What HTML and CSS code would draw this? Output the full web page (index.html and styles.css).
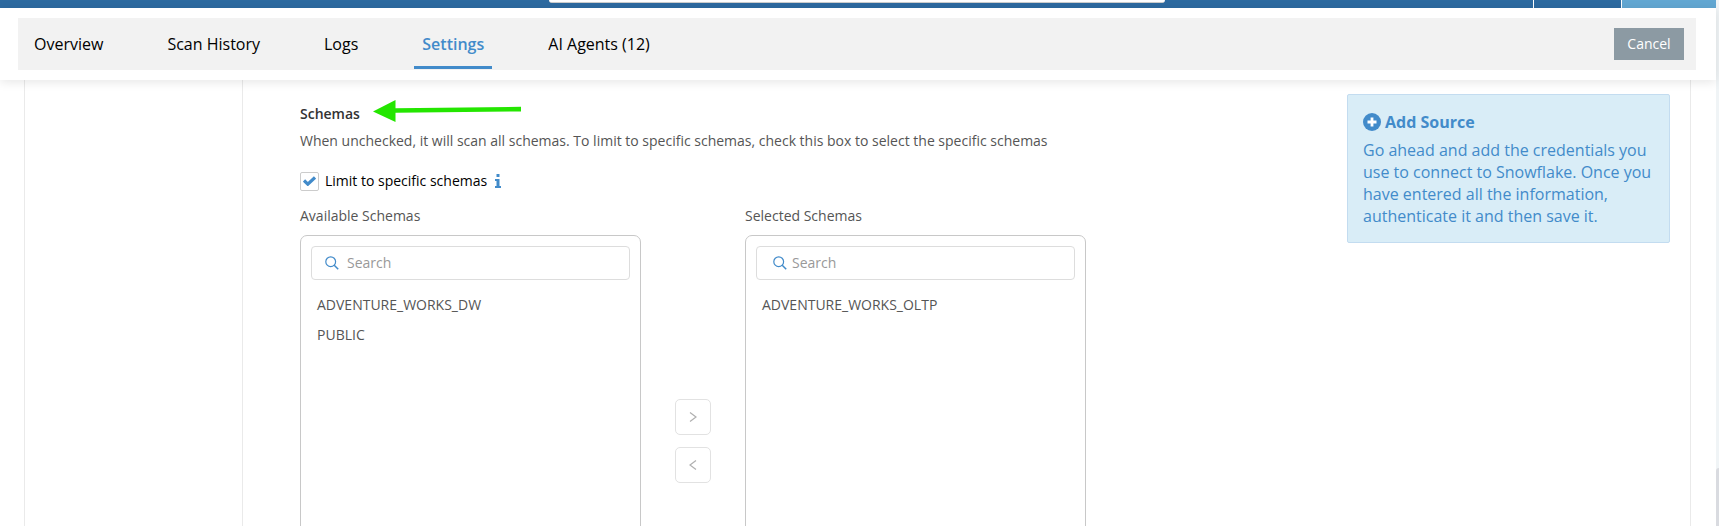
FILE: index.html
```html
<!DOCTYPE html>
<html lang="en">
<head>
<meta charset="utf-8">
<title>Source Settings</title>
<link rel="stylesheet" href="styles.css">
</head>
<body>
<div class="app">
  <div class="page">
    <div class="topbar">
      <div class="topbar-search"></div>
      <div class="topbar-cell"></div>
      <div class="topbar-cell topbar-user"></div>
    </div>
    <header class="header">
      <nav class="tabs">
        <a class="tab" href="#">Overview</a>
        <a class="tab" href="#">Scan History</a>
        <a class="tab" href="#">Logs</a>
        <a class="tab tab-active" href="#">Settings</a>
        <a class="tab" href="#">AI Agents (12)</a>
        <button class="cancel" type="button">Cancel</button>
      </nav>
    </header>
    <main class="panel">
      <div class="steps"></div>
      <section class="content">
        <div class="title-row">
          <h2 class="title">Schemas</h2>
          <svg class="arrow" width="150" height="24" viewBox="0 0 150 24" aria-hidden="true"><path d="M0 11.600 22.500 0v8.200L148 6.800v4.600L22.500 12.800V22z" fill="#24e600"/></svg>
        </div>
        <p class="hint">When unchecked, it will scan all schemas. To limit to specific schemas, check this box to select the specific schemas</p>
        <div class="limit">
          <input class="check" type="checkbox" id="limit" checked>
          <label for="limit">Limit to specific schemas</label>
          <svg class="info" width="6" height="14" viewBox="0 0 6 14" aria-hidden="true"><path d="M1.500 0h3v3h-3zM0 5h4.500v7H6v2H0v-2h1.500V7H0z" fill="#428bca"/></svg>
        </div>
        <div class="transfer">
          <div class="column">
            <label class="column-label" for="search-available">Available Schemas</label>
            <div class="list-box">
              <div class="search">
                <svg width="14" height="14" viewBox="0 0 14 14" aria-hidden="true"><circle cx="5.700" cy="5.700" r="4.900" fill="none" stroke="#428bca" stroke-width="1.200"/><path d="M9.200 9.200l4 4" stroke="#428bca" stroke-width="1.500"/></svg>
                <input id="search-available" type="text" placeholder="Search">
              </div>
              <ul class="items"><li>ADVENTURE_WORKS_DW</li><li>PUBLIC</li></ul>
            </div>
          </div>
          <div class="moves">
            <button class="move" type="button" aria-label="Add to selected"><svg width="8" height="12" viewBox="0 0 8 12"><path d="M1 1.500 7 6 1 10.500" fill="none" stroke="#b0b0b0" stroke-width="1.200"/></svg></button>
            <button class="move" type="button" aria-label="Remove from selected"><svg width="8" height="12" viewBox="0 0 8 12"><path d="M7 1.500 1 6l6 4.500" fill="none" stroke="#b0b0b0" stroke-width="1.200"/></svg></button>
          </div>
          <div class="column">
            <label class="column-label" for="search-selected">Selected Schemas</label>
            <div class="list-box">
              <div class="search search-selected">
                <svg width="14" height="14" viewBox="0 0 14 14" aria-hidden="true"><circle cx="5.700" cy="5.700" r="4.900" fill="none" stroke="#428bca" stroke-width="1.200"/><path d="M9.200 9.200l4 4" stroke="#428bca" stroke-width="1.500"/></svg>
                <input id="search-selected" type="text" placeholder="Search">
              </div>
              <ul class="items"><li>ADVENTURE_WORKS_OLTP</li></ul>
            </div>
          </div>
        </div>
      </section>
      <aside class="callout">
        <h3 class="callout-title"><svg width="18" height="18" viewBox="0 0 18 18" aria-hidden="true"><circle cx="9" cy="9" r="9" fill="#428bca"/><path d="M9 4.500v9M4.500 9h9" stroke="#fff" stroke-width="2.800"/></svg>Add Source</h3>
        <p>Go ahead and add the credentials you use to connect to Snowflake. Once you have entered all the information, authenticate it and then save it.</p>
      </aside>
    </main>
  </div>
  <div class="track"><div class="thumb"></div></div>
</div>
</body>
</html>
```

FILE: styles.css
```css
* { box-sizing: border-box; }
body, h2, h3, p, ul { margin: 0; padding: 0; }
body, input, button {
  font-family: "Open Sans", "Noto Sans", sans-serif;
  font-size: 14px;
  line-height: 20px;
}
body { background: #fff; color: #555; }
.app { display: flex; height: 100vh; overflow: hidden; }
.page { flex: 1; min-width: 0; }

.topbar {
  display: flex;
  justify-content: flex-end;
  height: 8px;
  background: #2d6aa0;
}
.topbar-search {
  width: 616px;
  height: 3px;
  margin-right: auto;
  margin-left: 32%;
  border-bottom: 1px solid #ccc;
  border-radius: 0 0 4px 4px;
  background: #fff;
}
.topbar-cell { width: 88px; border-left: 1px solid #fff; }
.topbar-user { width: 95px; background: #62a7d2; }

.header {
  position: relative;
  z-index: 1;
  padding: 10px 20px 10px 18px;
  background: #fff;
  box-shadow: 0 2px 10px rgba(0, 0, 0, 0.1);
}
.tabs {
  display: flex;
  align-items: center;
  gap: 48px;
  height: 52px;
  padding: 0 12px 0 8px;
  background: #f2f2f2;
}
.tab {
  height: 50px;
  padding: 0 8px;
  border-bottom: 3px solid transparent;
  color: #000;
  font-size: 16px;
  line-height: 50px;
  text-decoration: none;
}
.tab-active { border-color: #428bca; color: #428bca; font-weight: 600; }
.cancel {
  width: 70px;
  height: 32px;
  margin-left: auto;
  padding: 0;
  border: 0;
  background: #8c9aa3;
  color: #fff;
}

.panel {
  display: flex;
  align-items: flex-start;
  margin: 0 25px 0 24px;
  border: solid #eaeaea;
  border-width: 0 1px;
}
.steps { width: 217px; }
.content {
  flex: 1;
  padding: 20px 0 24px 57px;
  border-left: 1px solid #eaeaea;
}
.title-row { display: flex; gap: 13px; height: 24px; }
.title { color: #333; font-size: 14px; font-weight: 600; line-height: 28px; }
.hint { margin-top: 7px; }
.limit {
  display: flex;
  align-items: center;
  height: 20px;
  margin-top: 20px;
  color: #000;
}
.check {
  appearance: none;
  width: 19px;
  height: 19px;
  margin: 0 6px 0 0;
  border: 1px solid #ccc;
  border-radius: 2px;
}
.check:checked {
  background: url("data:image/svg+xml,%3Csvg xmlns='http://www.w3.org/2000/svg' width='13' height='10' viewBox='0 0 13 10'%3E%3Cpath d='M1 4.500l3.800 3.700L12 1.500' fill='none' stroke='%23428bca' stroke-width='3.200'/%3E%3C/svg%3E") center no-repeat;
}
.info { margin-left: 8px; }
.transfer { display: flex; margin-top: 15px; }
.column { width: 341px; }
.column-label { display: block; }
.list-box {
  height: 412px;
  margin-top: 9px;
  padding: 10px;
  border: 1px solid #c8c8c8;
  border-radius: 7px;
}
.search {
  display: flex;
  align-items: center;
  gap: 8px;
  height: 34px;
  padding: 0 13px;
  border: 1px solid #ddd;
  border-radius: 4px;
}
.search-selected { gap: 5px; padding-left: 16px; }
.search input {
  flex: 1;
  min-width: 0;
  padding: 0;
  border: 0;
  outline: 0;
  background: none;
  color: #555;
}
.search input::placeholder { color: #999; }
.items { padding: 10px 6px; list-style: none; line-height: 30px; }
.moves {
  display: flex;
  flex-direction: column;
  justify-content: center;
  gap: 12px;
  width: 104px;
  padding: 29px 0 0 34px;
}
.move {
  display: flex;
  align-items: center;
  justify-content: center;
  width: 36px;
  height: 36px;
  padding: 0;
  border: 1px solid #e2e2e2;
  border-radius: 5px;
  background: #fff;
}

.callout {
  width: 323px;
  margin: 14px 20px 0 0;
  padding: 16px 15px 15px;
  border: 1px solid #c3dcf0;
  border-radius: 2px;
  background: #d9edf7;
  color: #428bca;
  font-size: 16px;
  line-height: 22px;
}
.callout-title {
  display: flex;
  align-items: center;
  gap: 4px;
  margin-bottom: 6px;
  font-size: 16px;
  font-weight: 700;
  line-height: 22px;
}

.track { width: 3px; background: #f0f4f6; }
.thumb { height: 60px; margin-top: 468px; border-radius: 3px 0 0 0; background: #d9dbe0; }
```
